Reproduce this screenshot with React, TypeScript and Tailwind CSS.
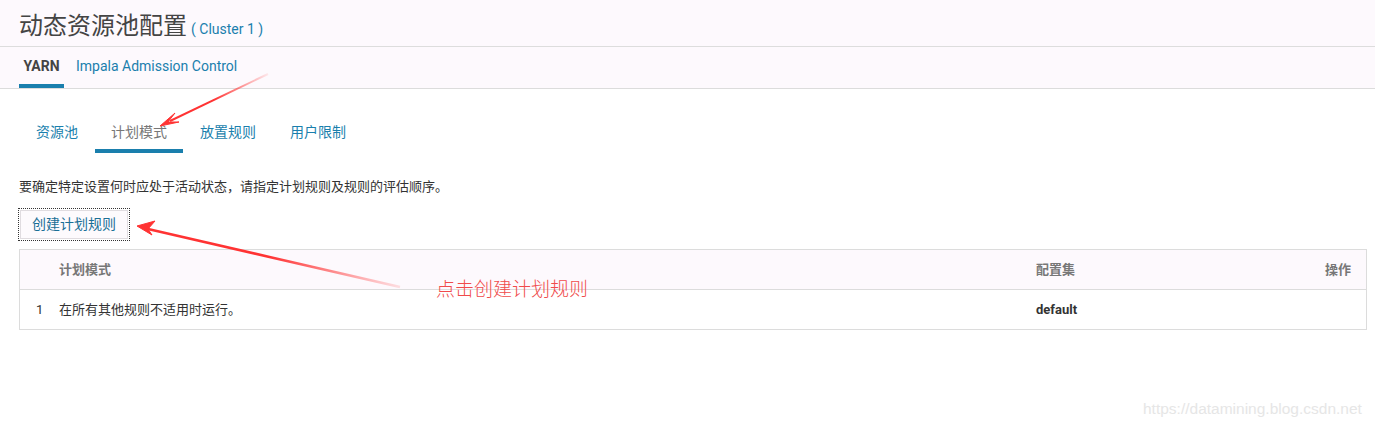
import React from "react";

const F = { fontFamily: '"Roboto", "Noto Sans CJK SC", sans-serif' };

export default function App() {
  return (
    <div className="relative w-[1375px] h-[428px] bg-white text-[#333]" style={F}>
      <div className="bg-[#fdf9fd]">
        <div className="h-[47px] border-b border-[#dddddd] px-[19px] flex items-end pb-[4px]">
          <span className="text-[24px] leading-[32px] text-[#444]">动态资源池配置</span>
          <span className="text-[14px] leading-[20px] text-[#1a7fad] ml-[4px] mb-[3px]">( Cluster 1 )</span>
        </div>
        <div className="h-[42px] border-b border-[#dcdcdc] px-[19px] flex items-end">
          <div className="h-full flex flex-col justify-end mr-[12px] w-[45px]">
            <div className="text-[14px] font-bold text-[#444] leading-[18px] mb-[9px] text-center">YARN</div>
            <div className="h-[4px] bg-[#1a7fad]" />
          </div>
          <div className="h-full flex flex-col justify-end">
            <div className="text-[14px] text-[#1a7fad] leading-[18px] mb-[13px]">Impala Admission Control</div>
          </div>
        </div>
      </div>

      <div className="px-[19px]">
        <div className="flex mt-[33px] h-[31px]">
          <div className="flex flex-col justify-between w-[76px] items-center">
            <span className="text-[14px] leading-[20px] text-[#1a7fad]">资源池</span>
          </div>
          <div className="flex flex-col justify-between w-[88px] items-center">
            <span className="text-[14px] leading-[20px] text-[#777]">计划模式</span>
            <div className="h-[4px] w-full bg-[#1a7fad]" />
          </div>
          <div className="flex flex-col justify-between w-[90px] items-center">
            <span className="text-[14px] leading-[20px] text-[#1a7fad]">放置规则</span>
          </div>
          <div className="flex flex-col justify-between w-[90px] items-center">
            <span className="text-[14px] leading-[20px] text-[#1a7fad]">用户限制</span>
          </div>
        </div>

        <div className="mt-[25px] text-[13px] leading-[18px] text-[#333]">
          要确定特定设置何时应处于活动状态，请指定计划规则及规则的评估顺序。
        </div>

        <div className="mt-[12px] -ml-[1px] w-[112px] h-[33px] border border-dotted border-[#333] p-[1px]">
          <div className="w-full h-full bg-[#fdfafd] border border-[#e0dce0] flex items-center justify-center text-[14px] text-[#1a6f96]">
            创建计划规则
          </div>
        </div>

        <div className="mt-[8px] border border-[#dcdcdc] w-[1348px]">
          <div className="h-[40px] bg-[#fdf9fd] border-b border-[#dcdcdc] flex items-center text-[13px] font-bold text-[#777]">
            <div className="w-[39px]" />
            <div className="flex-1">计划模式</div>
            <div className="w-[215px]">配置集</div>
            <div className="w-[115px] text-right pr-[15px]">操作</div>
          </div>
          <div className="h-[39px] flex items-center text-[13px] text-[#333]">
            <div className="w-[39px] pl-[16px]">1</div>
            <div className="flex-1">在所有其他规则不适用时运行。</div>
            <div className="w-[215px] font-bold">default</div>
            <div className="w-[115px]" />
          </div>
        </div>
      </div>

      <div className="absolute left-[436px] top-[276px] text-[19px] leading-[24px] text-[#f04b4b]" style={{ fontFamily: '"Noto Sans CJK SC", sans-serif', fontWeight: 300 }}>
        点击创建计划规则
      </div>

      <div className="absolute left-[1143px] top-[400px] text-[15.5px] leading-[18px] text-[#e6e6e6]" style={{ fontFamily: '"Liberation Sans", sans-serif' }}>
        https://datamining.blog.csdn.net
      </div>

      <svg className="absolute left-0 top-0 pointer-events-none" width="1375" height="428">
        <defs>
          <linearGradient id="g1" x1="268" y1="74" x2="160" y2="126" gradientUnits="userSpaceOnUse">
            <stop offset="0" stopColor="#f44" stopOpacity="0.1" />
            <stop offset="0.5" stopColor="#f33" stopOpacity="1" />
          </linearGradient>
          <linearGradient id="g2" x1="400" y1="287" x2="137" y2="226" gradientUnits="userSpaceOnUse">
            <stop offset="0" stopColor="#f44" stopOpacity="0.15" />
            <stop offset="0.5" stopColor="#f33" stopOpacity="1" />
          </linearGradient>
        </defs>
        <path d="M268 74 L170 121" stroke="url(#g1)" strokeWidth="2" fill="none" />
        <path d="M160 126 L175 113 L168 122 L179 122 Z" fill="#f33" stroke="#f33" strokeWidth="1" strokeLinejoin="round" />
        <path d="M400 287 L148 229" stroke="url(#g2)" strokeWidth="2.5" fill="none" />
        <path d="M137 226 L155 221 L148 229 L152 235 Z" fill="#f33" stroke="#f33" strokeWidth="1" strokeLinejoin="round" />
      </svg>
    </div>
  );
}
